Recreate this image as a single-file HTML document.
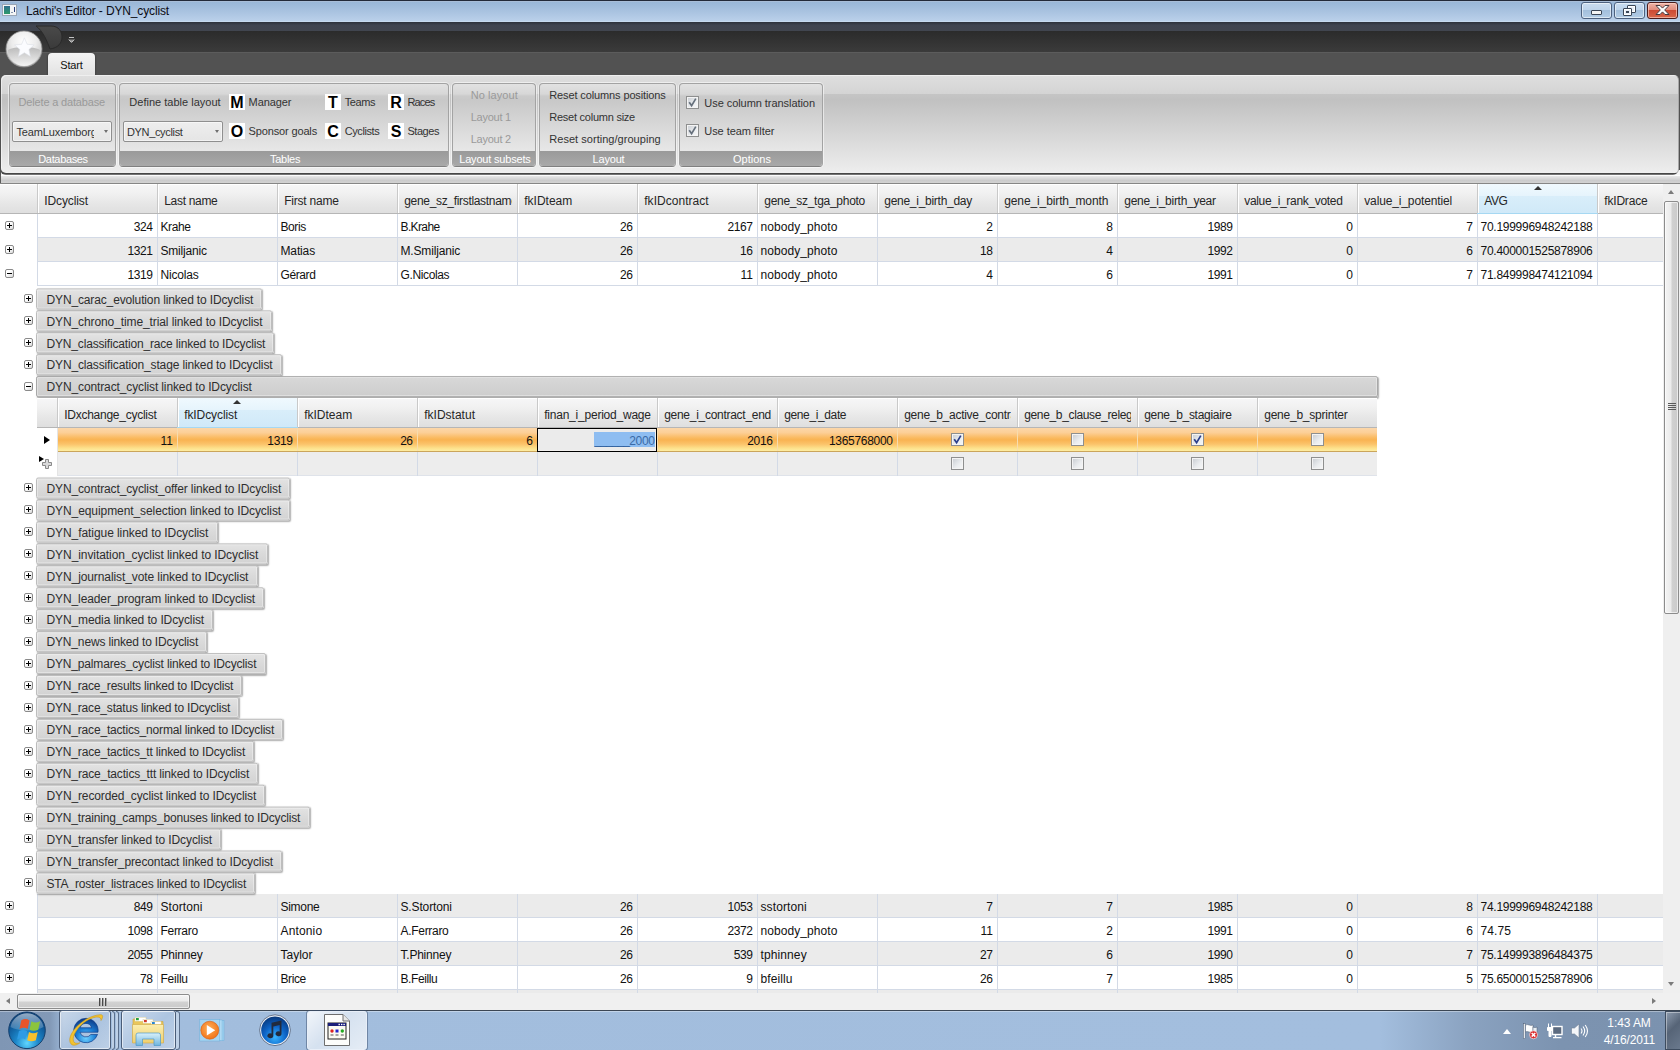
<!DOCTYPE html>
<html><head><meta charset="utf-8"><title>Lachi's Editor - DYN_cyclist</title>
<style>
html,body{margin:0;padding:0;background:#fff;}
body{width:1680px;height:1050px;overflow:hidden;font-family:"Liberation Sans",sans-serif;font-size:12px;}
#r{position:relative;width:1680px;height:1050px;overflow:hidden;background:#fff;}
#r div,#r span,#r svg{position:absolute;box-sizing:border-box;}
.t{white-space:pre;line-height:16px;height:16px;}
.grp{border:1px solid #a3a3a3;border-bottom-color:#808080;border-radius:4px;top:83px;height:84px;overflow:hidden;
 background:linear-gradient(#e2e2e2 0,#d7d7d7 10px,#cbcbcb 12px,#c8c8c8 16px,#e8e8e8 68px);box-shadow:0 0 0 1px rgba(255,255,255,.55);}
.grp i{position:absolute;left:0;right:0;bottom:0;height:15px;background:linear-gradient(#9a9a9a,#a9a9a9);}
.combo{top:121px;height:21px;width:100px;border:1px solid #8f8f8f;border-radius:2px;background:linear-gradient(#eeeeee,#e5e5e5);box-shadow:inset 0 0 0 1px rgba(255,255,255,.55);}
.combo b{position:absolute;right:3px;top:8px;width:0;height:0;border-left:2.5px solid transparent;border-right:2.5px solid transparent;border-top:3px solid #6e6e6e;}
.ico{width:16px;height:16px;background:#fff;}
.cb{width:13px;height:13px;border:1px solid #8e8f8f;background:linear-gradient(135deg,#cdd1d6 10%,#eceef0 60%,#f6f6f7 100%);box-shadow:inset 0 0 0 1px #f4f4f4;}
.cb.r{}
.xb.on{background:linear-gradient(#d8d8d8,#cdcdcd);border-color:#a8a8a8;}
.hdr{background:linear-gradient(#ffffff 0,#ffffff 1px,#f6f6f7 1px,#f0f0f0 35%,#e7e7e7 65%,#dfdfdf 100%);border-bottom:1px solid #b6b6b6;}
.hsep{width:2px;background:linear-gradient(90deg,#c9c9c9 0,#c9c9c9 50%,#fff 50%);}
.hsort{background:linear-gradient(#f0f9fe 0,#e6f4fc 40%,#d9eefa 42%,#d0e9f8 100%);border:1px solid #a6d8f2;border-top:none;}
.vl{width:1px;background:#d3dae6;}
.hl{height:1px;background:#d3dae6;}
.alt{background:#ebebeb;}
.xb{height:21px;border:1px solid #bdbdbd;border-radius:2px;background:linear-gradient(#e3e3e3 0,#dadada 50%,#d3d3d3 100%);box-shadow:1px 1px 1.5px rgba(0,0,0,.32), inset 0 0 0 1px rgba(255,255,255,.35);}
.pm{width:9px;height:9px;border:1px solid #8a8a8a;border-radius:2px;background:linear-gradient(135deg,#fff 0,#fff 40%,#d8d8d8 100%);}
.pm:before{content:"";position:absolute;left:1px;top:3px;width:5px;height:1px;background:#000;}
.pm.p:after{content:"";position:absolute;left:3px;top:1px;width:1px;height:5px;background:#000;}
.wb{top:2px;height:17px;width:31px;border:1px solid #4d617f;border-radius:3px;background:linear-gradient(#c9dcf0 0,#bdd3ea 48%,#a3bfdc 50%,#b3cde6 100%);box-shadow:inset 0 0 0 1px rgba(255,255,255,.55);}
.tbb{top:1010px;height:40px;border:1px solid #4a5d78;border-radius:3px;background:linear-gradient(135deg,rgba(255,255,255,.45),rgba(255,255,255,.12) 55%,rgba(255,255,255,.3));box-shadow:inset 0 0 0 1px rgba(255,255,255,.55);}
</style></head><body><div id="r">
<div style="left:0;top:0;width:1680px;height:22px;background:linear-gradient(#97b5d6 0,#9fbbda 25%,#acc5e2 60%,#bcd2eb 100%);"></div><div style="left:0;top:0;width:1680px;height:1px;background:#232a38;"></div><div style="left:0;top:1px;width:1680px;height:1px;background:#a9bed8;"></div><div style="left:0;top:21px;width:1680px;height:1px;background:#c6daf0;"></div><div style="left:2px;top:4px;width:15px;height:12px;background:#f4f5f6;border:1px solid #9aa6b6;"></div><div style="left:4px;top:6px;width:6px;height:8px;background:linear-gradient(#2f6f8f,#2f9a6a);"></div><div style="left:11px;top:12px;width:2px;height:1px;background:#8a98ac;"></div><div style="left:14px;top:7px;width:1px;height:5px;background:#2a3f7a;"></div><div class="wb" style="left:1581px;"></div><div style="left:1591px;top:10px;width:11px;height:5px;border:1px solid #3b4656;border-radius:1px;background:#f4f4f4;"></div><div class="wb" style="left:1614px;"></div><div style="left:1627px;top:5px;width:9px;height:8px;border:1px solid #3b4656;border-radius:1px;background:#e8eef6;box-shadow:inset 0 0 0 1px #fff;"></div><div style="left:1623px;top:8px;width:9px;height:8px;border:1px solid #3b4656;border-radius:1px;background:#e8eef6;box-shadow:inset 0 0 0 1px #fff;"></div><div style="left:1626px;top:11px;width:3px;height:2px;background:#3b4656;"></div><div class="wb" style="left:1647px;border-color:#4a1c1c;background:linear-gradient(#eeb3a6 0,#e0897a 48%,#cd4a33 50%,#d8674a 100%);box-shadow:inset 0 0 0 1px rgba(255,220,210,.6);"></div><svg style="left:1655px;top:4px" width="15" height="12" viewBox="0 0 15 12"><path d="M1 1.5h4l2.5 2.6 2.5-2.6h4l-4.3 4.5 4.3 4.5h-4l-2.5-2.6-2.5 2.6h-4l4.3-4.5z" fill="#fbfbfb" stroke="#453a40" stroke-width="1" stroke-linejoin="round"/></svg><div style="left:0;top:22px;width:1680px;height:9px;background:linear-gradient(#2c313b 0,#3f4450 35%,#41454f 100%);"></div><div style="left:0;top:31px;width:1680px;height:21px;background:linear-gradient(#2b2b2b,#3b3b3b);"></div><div style="left:0;top:52px;width:1680px;height:23px;background:#525252;border-top:1px solid #5c5c5c;"></div><svg style="left:34px;top:24px" width="32" height="28" viewBox="0 0 32 28"><defs><linearGradient id="qg" x1="0" y1="0" x2="0" y2="1"><stop offset="0" stop-color="#4a4a4a"/><stop offset="1" stop-color="#3a3a3a"/></linearGradient></defs><path d="M2 2 H17 C25 2 28 8 28 13 C28 19 24 24 16 25 C13 17 9 7 2 2 Z" fill="url(#qg)" stroke="#2a2a2a" stroke-width="1"/></svg><div style="left:69px;top:37px;width:5px;height:1px;background:#c4c4c4;"></div><svg style="left:68px;top:39px" width="7" height="5" viewBox="0 0 7 5"><path d="M.8 .6 L3.5 3.4 L6.2 .6" fill="#8a8a8a" stroke="#cfcfcf" stroke-width="1"/></svg><div style="left:48px;top:53px;width:47px;height:23px;border-radius:4px 4px 0 0;background:linear-gradient(#f4f4f4,#e2e2e2);box-shadow:0 0 2px rgba(0,0,0,.5);"></div><svg style="left:4px;top:29px" width="40" height="40" viewBox="0 0 40 40"><defs><radialGradient id="ab" cx="0.5" cy="0.3" r="0.75"><stop offset="0" stop-color="#ffffff"/><stop offset="0.45" stop-color="#ececec"/><stop offset="0.8" stop-color="#c9c9c9"/><stop offset="1" stop-color="#a8a8a8"/></radialGradient><linearGradient id="ab2" x1="0" y1="0" x2="0" y2="1"><stop offset="0" stop-color="#b2b2b2"/><stop offset="1" stop-color="#fbfbfb"/></linearGradient></defs><circle cx="20" cy="20" r="18" fill="url(#ab)" stroke="#8e8e8e" stroke-width="0.8"/><path d="M4 21 A16 16 0 0 0 36 21 C30 17 10 17 4 21Z" fill="url(#ab2)" opacity="0.88"/><path d="M20.4 8.8 l2.8 6.5 7 .6 -5.3 4.7 1.6 6.9 -6.1 -3.7 -6.1 3.7 1.6 -6.9 -5.3 -4.7 7 -.6z" fill="#fbfcff" stroke="#dcdfe6" stroke-width="0.6"/></svg><div style="left:0;top:75px;width:1680px;height:101px;background:#525252;"></div><div style="left:1px;top:170px;width:1679px;height:14px;background:#f4f4f4;"></div><div style="left:0;top:79px;width:1678px;height:96px;border-radius:0 0 5px 6px;background:linear-gradient(#505050 0,#505050 93px,#474747 94px,#474747 95px,#747474 95px,#747474 96px);"></div><div style="left:1px;top:75px;width:1678px;height:98px;border-radius:5px 5px 4px 5px;border-right:1px solid #a8a8a8;background:linear-gradient(#dfdfdf 0,#d4d4d4 19px,#c5c5c5 19px,#c1c1c1 25px,#ececec 95px,#f0f0f0 98px);box-shadow:inset 1px 1px 0 rgba(255,255,255,.5);"></div><div class="grp" style="left:9px;width:107px;"><i></i></div><div class="grp" style="left:119px;width:330px;"><i></i></div><div class="grp" style="left:452px;width:84px;"><i></i></div><div class="grp" style="left:539px;width:137px;"><i></i></div><div class="grp" style="left:679px;width:144px;"><i></i></div><div class="combo" style="left:12px;"><b></b></div><div class="combo" style="left:123px;"><b></b></div><div class="ico" style="left:229px;top:94px;"></div><div class="ico" style="left:325px;top:94px;"></div><div class="ico" style="left:388px;top:94px;"></div><div class="ico" style="left:229px;top:123px;"></div><div class="ico" style="left:325px;top:123px;"></div><div class="ico" style="left:388px;top:123px;"></div><div class="cb" style="left:686px;top:96px;"></div><svg style="left:686px;top:96px" width="13" height="13" viewBox="0 0 13 13"><path d="M3.2 6.2 L5.6 9.6 L9.8 2.6" fill="none" stroke="#66707c" stroke-width="1.7"/></svg><div class="cb" style="left:686px;top:124px;"></div><svg style="left:686px;top:124px" width="13" height="13" viewBox="0 0 13 13"><path d="M3.2 6.2 L5.6 9.6 L9.8 2.6" fill="none" stroke="#66707c" stroke-width="1.7"/></svg><div style="left:0;top:175px;width:1680px;height:1px;background:#fcfcfc;border-left:1px solid #5a5a5a;"></div><div style="left:0;top:176px;width:1680px;height:7px;background:linear-gradient(#e8e8e8 0,#cbcbcc 65%,#d3d3d3 100%);border-left:1px solid #5a5a5a;"></div><div style="left:0;top:183px;width:1680px;height:1px;background:#868686;"></div><div class="hdr" style="left:0;top:184px;width:1663px;height:30px;"></div><div class="hsort" style="left:1477px;top:184px;width:121px;height:30px;"></div><div class="hsep" style="left:37px;top:184px;height:29px;"></div><div class="hsep" style="left:157px;top:184px;height:29px;"></div><div class="hsep" style="left:277px;top:184px;height:29px;"></div><div class="hsep" style="left:397px;top:184px;height:29px;"></div><div class="hsep" style="left:517px;top:184px;height:29px;"></div><div class="hsep" style="left:637px;top:184px;height:29px;"></div><div class="hsep" style="left:757px;top:184px;height:29px;"></div><div class="hsep" style="left:877px;top:184px;height:29px;"></div><div class="hsep" style="left:997px;top:184px;height:29px;"></div><div class="hsep" style="left:1117px;top:184px;height:29px;"></div><div class="hsep" style="left:1237px;top:184px;height:29px;"></div><div class="hsep" style="left:1357px;top:184px;height:29px;"></div><div class="hsep" style="left:1477px;top:184px;height:29px;"></div><div class="hsep" style="left:1597px;top:184px;height:29px;"></div><div style="left:1534px;top:186px;width:0;height:0;border-left:4px solid transparent;border-right:4px solid transparent;border-bottom:4px solid #333;"></div><div class="hl" style="left:37px;top:237px;width:1626px;"></div><div class="vl" style="left:37px;top:214px;height:24px;"></div><div class="vl" style="left:157px;top:214px;height:24px;"></div><div class="vl" style="left:277px;top:214px;height:24px;"></div><div class="vl" style="left:397px;top:214px;height:24px;"></div><div class="vl" style="left:517px;top:214px;height:24px;"></div><div class="vl" style="left:637px;top:214px;height:24px;"></div><div class="vl" style="left:757px;top:214px;height:24px;"></div><div class="vl" style="left:877px;top:214px;height:24px;"></div><div class="vl" style="left:997px;top:214px;height:24px;"></div><div class="vl" style="left:1117px;top:214px;height:24px;"></div><div class="vl" style="left:1237px;top:214px;height:24px;"></div><div class="vl" style="left:1357px;top:214px;height:24px;"></div><div class="vl" style="left:1477px;top:214px;height:24px;"></div><div class="vl" style="left:1597px;top:214px;height:24px;"></div><div class="pm p" style="left:5px;top:221px;"></div><div class="alt" style="left:37px;top:238px;width:1626px;height:24px;"></div><div class="hl" style="left:37px;top:261px;width:1626px;"></div><div class="vl" style="left:37px;top:238px;height:24px;"></div><div class="vl" style="left:157px;top:238px;height:24px;"></div><div class="vl" style="left:277px;top:238px;height:24px;"></div><div class="vl" style="left:397px;top:238px;height:24px;"></div><div class="vl" style="left:517px;top:238px;height:24px;"></div><div class="vl" style="left:637px;top:238px;height:24px;"></div><div class="vl" style="left:757px;top:238px;height:24px;"></div><div class="vl" style="left:877px;top:238px;height:24px;"></div><div class="vl" style="left:997px;top:238px;height:24px;"></div><div class="vl" style="left:1117px;top:238px;height:24px;"></div><div class="vl" style="left:1237px;top:238px;height:24px;"></div><div class="vl" style="left:1357px;top:238px;height:24px;"></div><div class="vl" style="left:1477px;top:238px;height:24px;"></div><div class="vl" style="left:1597px;top:238px;height:24px;"></div><div class="pm p" style="left:5px;top:245px;"></div><div class="hl" style="left:37px;top:285px;width:1626px;"></div><div class="vl" style="left:37px;top:262px;height:24px;"></div><div class="vl" style="left:157px;top:262px;height:24px;"></div><div class="vl" style="left:277px;top:262px;height:24px;"></div><div class="vl" style="left:397px;top:262px;height:24px;"></div><div class="vl" style="left:517px;top:262px;height:24px;"></div><div class="vl" style="left:637px;top:262px;height:24px;"></div><div class="vl" style="left:757px;top:262px;height:24px;"></div><div class="vl" style="left:877px;top:262px;height:24px;"></div><div class="vl" style="left:997px;top:262px;height:24px;"></div><div class="vl" style="left:1117px;top:262px;height:24px;"></div><div class="vl" style="left:1237px;top:262px;height:24px;"></div><div class="vl" style="left:1357px;top:262px;height:24px;"></div><div class="vl" style="left:1477px;top:262px;height:24px;"></div><div class="vl" style="left:1597px;top:262px;height:24px;"></div><div class="pm " style="left:5px;top:269px;"></div><div class="alt" style="left:37px;top:894px;width:1626px;height:24px;"></div><div class="hl" style="left:37px;top:917px;width:1626px;"></div><div class="vl" style="left:37px;top:894px;height:24px;"></div><div class="vl" style="left:157px;top:894px;height:24px;"></div><div class="vl" style="left:277px;top:894px;height:24px;"></div><div class="vl" style="left:397px;top:894px;height:24px;"></div><div class="vl" style="left:517px;top:894px;height:24px;"></div><div class="vl" style="left:637px;top:894px;height:24px;"></div><div class="vl" style="left:757px;top:894px;height:24px;"></div><div class="vl" style="left:877px;top:894px;height:24px;"></div><div class="vl" style="left:997px;top:894px;height:24px;"></div><div class="vl" style="left:1117px;top:894px;height:24px;"></div><div class="vl" style="left:1237px;top:894px;height:24px;"></div><div class="vl" style="left:1357px;top:894px;height:24px;"></div><div class="vl" style="left:1477px;top:894px;height:24px;"></div><div class="vl" style="left:1597px;top:894px;height:24px;"></div><div class="pm p" style="left:5px;top:901px;"></div><div class="hl" style="left:37px;top:941px;width:1626px;"></div><div class="vl" style="left:37px;top:918px;height:24px;"></div><div class="vl" style="left:157px;top:918px;height:24px;"></div><div class="vl" style="left:277px;top:918px;height:24px;"></div><div class="vl" style="left:397px;top:918px;height:24px;"></div><div class="vl" style="left:517px;top:918px;height:24px;"></div><div class="vl" style="left:637px;top:918px;height:24px;"></div><div class="vl" style="left:757px;top:918px;height:24px;"></div><div class="vl" style="left:877px;top:918px;height:24px;"></div><div class="vl" style="left:997px;top:918px;height:24px;"></div><div class="vl" style="left:1117px;top:918px;height:24px;"></div><div class="vl" style="left:1237px;top:918px;height:24px;"></div><div class="vl" style="left:1357px;top:918px;height:24px;"></div><div class="vl" style="left:1477px;top:918px;height:24px;"></div><div class="vl" style="left:1597px;top:918px;height:24px;"></div><div class="pm p" style="left:5px;top:925px;"></div><div class="alt" style="left:37px;top:942px;width:1626px;height:24px;"></div><div class="hl" style="left:37px;top:965px;width:1626px;"></div><div class="vl" style="left:37px;top:942px;height:24px;"></div><div class="vl" style="left:157px;top:942px;height:24px;"></div><div class="vl" style="left:277px;top:942px;height:24px;"></div><div class="vl" style="left:397px;top:942px;height:24px;"></div><div class="vl" style="left:517px;top:942px;height:24px;"></div><div class="vl" style="left:637px;top:942px;height:24px;"></div><div class="vl" style="left:757px;top:942px;height:24px;"></div><div class="vl" style="left:877px;top:942px;height:24px;"></div><div class="vl" style="left:997px;top:942px;height:24px;"></div><div class="vl" style="left:1117px;top:942px;height:24px;"></div><div class="vl" style="left:1237px;top:942px;height:24px;"></div><div class="vl" style="left:1357px;top:942px;height:24px;"></div><div class="vl" style="left:1477px;top:942px;height:24px;"></div><div class="vl" style="left:1597px;top:942px;height:24px;"></div><div class="pm p" style="left:5px;top:949px;"></div><div class="hl" style="left:37px;top:989px;width:1626px;"></div><div class="vl" style="left:37px;top:966px;height:24px;"></div><div class="vl" style="left:157px;top:966px;height:24px;"></div><div class="vl" style="left:277px;top:966px;height:24px;"></div><div class="vl" style="left:397px;top:966px;height:24px;"></div><div class="vl" style="left:517px;top:966px;height:24px;"></div><div class="vl" style="left:637px;top:966px;height:24px;"></div><div class="vl" style="left:757px;top:966px;height:24px;"></div><div class="vl" style="left:877px;top:966px;height:24px;"></div><div class="vl" style="left:997px;top:966px;height:24px;"></div><div class="vl" style="left:1117px;top:966px;height:24px;"></div><div class="vl" style="left:1237px;top:966px;height:24px;"></div><div class="vl" style="left:1357px;top:966px;height:24px;"></div><div class="vl" style="left:1477px;top:966px;height:24px;"></div><div class="vl" style="left:1597px;top:966px;height:24px;"></div><div class="pm p" style="left:5px;top:973px;"></div><div class="alt" style="left:37px;top:990px;width:1626px;height:3px;"></div><div class="vl" style="left:37px;top:990px;height:3px;"></div><div class="vl" style="left:157px;top:990px;height:3px;"></div><div class="vl" style="left:277px;top:990px;height:3px;"></div><div class="vl" style="left:397px;top:990px;height:3px;"></div><div class="vl" style="left:517px;top:990px;height:3px;"></div><div class="vl" style="left:637px;top:990px;height:3px;"></div><div class="vl" style="left:757px;top:990px;height:3px;"></div><div class="vl" style="left:877px;top:990px;height:3px;"></div><div class="vl" style="left:997px;top:990px;height:3px;"></div><div class="vl" style="left:1117px;top:990px;height:3px;"></div><div class="vl" style="left:1237px;top:990px;height:3px;"></div><div class="vl" style="left:1357px;top:990px;height:3px;"></div><div class="vl" style="left:1477px;top:990px;height:3px;"></div><div class="vl" style="left:1597px;top:990px;height:3px;"></div><div class="xb" style="left:36px;top:288px;width:226px;transform:translateY(0.40px);"></div><div class="pm p" style="left:24px;top:294px;"></div><div class="xb" style="left:36px;top:310px;width:236px;transform:translateY(0.33px);"></div><div class="pm p" style="left:24px;top:316px;"></div><div class="xb" style="left:36px;top:332px;width:238px;transform:translateY(0.26px);"></div><div class="pm p" style="left:24px;top:338px;"></div><div class="xb" style="left:36px;top:354px;width:246px;transform:translateY(0.19px);"></div><div class="pm p" style="left:24px;top:360px;"></div><div class="xb on" style="left:36px;top:376px;width:1342px;transform:translateY(0.12px);"></div><div class="pm " style="left:24px;top:382px;"></div><div class="xb" style="left:36px;top:477px;width:254px;transform:translateY(0.55px);"></div><div class="pm p" style="left:24px;top:483px;"></div><div class="xb" style="left:36px;top:499px;width:254px;transform:translateY(0.49px);"></div><div class="pm p" style="left:24px;top:505px;"></div><div class="xb" style="left:36px;top:521px;width:182px;transform:translateY(0.43px);"></div><div class="pm p" style="left:24px;top:527px;"></div><div class="xb" style="left:36px;top:543px;width:232px;transform:translateY(0.37px);"></div><div class="pm p" style="left:24px;top:549px;"></div><div class="xb" style="left:36px;top:565px;width:222px;transform:translateY(0.31px);"></div><div class="pm p" style="left:24px;top:571px;"></div><div class="xb" style="left:36px;top:587px;width:228px;transform:translateY(0.25px);"></div><div class="pm p" style="left:24px;top:593px;"></div><div class="xb" style="left:36px;top:609px;width:177px;transform:translateY(0.19px);"></div><div class="pm p" style="left:24px;top:615px;"></div><div class="xb" style="left:36px;top:631px;width:171px;transform:translateY(0.13px);"></div><div class="pm p" style="left:24px;top:637px;"></div><div class="xb" style="left:36px;top:653px;width:230px;transform:translateY(0.07px);"></div><div class="pm p" style="left:24px;top:659px;"></div><div class="xb" style="left:36px;top:675px;width:206px;"></div><div class="pm p" style="left:24px;top:681px;"></div><div class="xb" style="left:36px;top:696px;width:203px;transform:translateY(0.95px);"></div><div class="pm p" style="left:24px;top:703px;"></div><div class="xb" style="left:36px;top:718px;width:247px;transform:translateY(0.89px);"></div><div class="pm p" style="left:24px;top:725px;"></div><div class="xb" style="left:36px;top:740px;width:218px;transform:translateY(0.83px);"></div><div class="pm p" style="left:24px;top:747px;"></div><div class="xb" style="left:36px;top:762px;width:222px;transform:translateY(0.77px);"></div><div class="pm p" style="left:24px;top:769px;"></div><div class="xb" style="left:36px;top:784px;width:229px;transform:translateY(0.71px);"></div><div class="pm p" style="left:24px;top:791px;"></div><div class="xb" style="left:36px;top:806px;width:274px;transform:translateY(0.65px);"></div><div class="pm p" style="left:24px;top:813px;"></div><div class="xb" style="left:36px;top:828px;width:185px;transform:translateY(0.59px);"></div><div class="pm p" style="left:24px;top:834px;"></div><div class="xb" style="left:36px;top:850px;width:246px;transform:translateY(0.53px);"></div><div class="pm p" style="left:24px;top:856px;"></div><div class="xb" style="left:36px;top:872px;width:219px;transform:translateY(0.47px);"></div><div class="pm p" style="left:24px;top:878px;"></div><div class="hdr" style="left:37px;top:398px;width:1340px;height:30px;"></div><div class="hsort" style="left:177px;top:398px;width:121px;height:30px;"></div><div class="hsep" style="left:57px;top:398px;height:29px;"></div><div class="hsep" style="left:177px;top:398px;height:29px;"></div><div class="hsep" style="left:297px;top:398px;height:29px;"></div><div class="hsep" style="left:417px;top:398px;height:29px;"></div><div class="hsep" style="left:537px;top:398px;height:29px;"></div><div class="hsep" style="left:657px;top:398px;height:29px;"></div><div class="hsep" style="left:777px;top:398px;height:29px;"></div><div class="hsep" style="left:897px;top:398px;height:29px;"></div><div class="hsep" style="left:1017px;top:398px;height:29px;"></div><div class="hsep" style="left:1137px;top:398px;height:29px;"></div><div class="hsep" style="left:1257px;top:398px;height:29px;"></div><div style="left:233px;top:400px;width:0;height:0;border-left:4px solid transparent;border-right:4px solid transparent;border-bottom:4px solid #333;"></div><div style="left:57px;top:428px;width:1320px;height:24px;background:linear-gradient(#fcd7aa 0,#fccf97 20%,#fab95e 44%,#f9b352 52%,#fbc36a 70%,#fde18c 88%,#feeda2 100%);border-bottom:1px solid #caa55c;"></div><div style="left:57px;top:452px;width:1320px;height:24px;background:#ededed;"></div><div class="hl" style="left:57px;top:475px;width:1320px;background:#dfe3ea;"></div><div class="vl" style="left:177px;top:428px;height:23px;background:#f7dcae;"></div><div class="vl" style="left:177px;top:452px;height:24px;"></div><div class="vl" style="left:297px;top:428px;height:23px;background:#f7dcae;"></div><div class="vl" style="left:297px;top:452px;height:24px;"></div><div class="vl" style="left:417px;top:428px;height:23px;background:#f7dcae;"></div><div class="vl" style="left:417px;top:452px;height:24px;"></div><div class="vl" style="left:537px;top:428px;height:23px;background:#f7dcae;"></div><div class="vl" style="left:537px;top:452px;height:24px;"></div><div class="vl" style="left:657px;top:428px;height:23px;background:#f7dcae;"></div><div class="vl" style="left:657px;top:452px;height:24px;"></div><div class="vl" style="left:777px;top:428px;height:23px;background:#f7dcae;"></div><div class="vl" style="left:777px;top:452px;height:24px;"></div><div class="vl" style="left:897px;top:428px;height:23px;background:#f7dcae;"></div><div class="vl" style="left:897px;top:452px;height:24px;"></div><div class="vl" style="left:1017px;top:428px;height:23px;background:#f7dcae;"></div><div class="vl" style="left:1017px;top:452px;height:24px;"></div><div class="vl" style="left:1137px;top:428px;height:23px;background:#f7dcae;"></div><div class="vl" style="left:1137px;top:452px;height:24px;"></div><div class="vl" style="left:1257px;top:428px;height:23px;background:#f7dcae;"></div><div class="vl" style="left:1257px;top:452px;height:24px;"></div><div class="vl" style="left:57px;top:428px;height:48px;background:#e4e4e4;"></div><div style="left:44px;top:436px;width:0;height:0;border-top:4px solid transparent;border-bottom:4px solid transparent;border-left:6px solid #000;"></div><div style="left:39px;top:456px;width:0;height:0;border-top:3.5px solid transparent;border-bottom:3.5px solid transparent;border-left:5px solid #000;"></div><svg style="left:42px;top:459px" width="10" height="10" viewBox="0 0 10 10"><path d="M3.5 .5h3v3h3v3h-3v3h-3v-3h-3v-3h3z" fill="#d9d9da" stroke="#8a8a8a" stroke-width="1"/></svg><div style="left:537px;top:428px;width:120px;height:24px;background:#ebebeb;border:1px solid #000;box-shadow:inset 0 0 0 1px #f2f0ee;"></div><div style="left:594px;top:432px;width:61px;height:15px;background:#8ebdf1;"></div><div class="cb" style="left:951px;top:433px;"></div><div class="cb r" style="left:951px;top:457px;"></div><svg style="left:951px;top:433px" width="13" height="13" viewBox="0 0 13 13"><path d="M3.2 6.2 L5.6 9.6 L9.8 2.6" fill="none" stroke="#2b3f8c" stroke-width="1.7"/></svg><div class="cb" style="left:1071px;top:433px;"></div><div class="cb r" style="left:1071px;top:457px;"></div><div class="cb" style="left:1191px;top:433px;"></div><div class="cb r" style="left:1191px;top:457px;"></div><svg style="left:1191px;top:433px" width="13" height="13" viewBox="0 0 13 13"><path d="M3.2 6.2 L5.6 9.6 L9.8 2.6" fill="none" stroke="#2b3f8c" stroke-width="1.7"/></svg><div class="cb" style="left:1311px;top:433px;"></div><div class="cb r" style="left:1311px;top:457px;"></div><div style="left:1663px;top:184px;width:17px;height:809px;background:#efefef;"></div><div style="left:1664px;top:201px;width:15px;height:413px;border:1px solid #8c8c8c;border-radius:2px;background:linear-gradient(90deg,#f4f4f4 0,#ebebeb 45%,#d0d0d0 55%,#cacaca 100%);box-shadow:inset 0 0 0 1px rgba(255,255,255,.6);"></div><div style="left:1668px;top:403px;width:8px;height:1px;background:#5a5a5a;"></div><div style="left:1668px;top:405px;width:8px;height:1px;background:#5a5a5a;"></div><div style="left:1668px;top:407px;width:8px;height:1px;background:#5a5a5a;"></div><div style="left:1668px;top:409px;width:8px;height:1px;background:#5a5a5a;"></div><div style="left:1668px;top:190px;width:0;height:0;border-left:3.5px solid transparent;border-right:3.5px solid transparent;border-bottom:4px solid #7b7b7b;"></div><div style="left:1668px;top:982px;width:0;height:0;border-left:3.5px solid transparent;border-right:3.5px solid transparent;border-top:4px solid #7b7b7b;"></div><div style="left:0;top:993px;width:1680px;height:17px;background:#f0f0f0;"></div><div style="left:17px;top:994px;width:173px;height:15px;border:1px solid #8c8c8c;border-radius:2px;background:linear-gradient(#f4f4f4 0,#ebebeb 45%,#d2d2d2 55%,#cacaca 100%);box-shadow:inset 0 0 0 1px rgba(255,255,255,.6);"></div><div style="left:99px;top:998px;width:2px;height:8px;background:linear-gradient(90deg,#4a4a4a 50%,#a6a6a6 50%);"></div><div style="left:102px;top:998px;width:2px;height:8px;background:linear-gradient(90deg,#4a4a4a 50%,#a6a6a6 50%);"></div><div style="left:105px;top:998px;width:2px;height:8px;background:linear-gradient(90deg,#4a4a4a 50%,#a6a6a6 50%);"></div><div style="left:6px;top:998px;width:0;height:0;border-top:3.5px solid transparent;border-bottom:3.5px solid transparent;border-right:4px solid #7b7b7b;"></div><div style="left:1652px;top:998px;width:0;height:0;border-top:3.5px solid transparent;border-bottom:3.5px solid transparent;border-left:4px solid #7b7b7b;"></div><div style="left:0;top:1010px;width:1680px;height:40px;background:linear-gradient(90deg,#7f96b4 0,#8299b7 50px,#9db8d8 64px,#a2bddd 120px,#a3bede 1380px,#8aa2c0 1470px,#7c93b0 1560px,#7b92af 1680px);"></div><div style="left:0;top:1010px;width:1680px;height:1px;background:#3b4654;"></div><div style="left:0;top:1011px;width:1680px;height:1px;background:rgba(255,255,255,.35);"></div><svg style="left:6px;top:1010px" width="42" height="40" viewBox="0 0 42 40"><defs>
<radialGradient id="so" cx="0.5" cy="0.85" r="0.9"><stop offset="0" stop-color="#5fd6ff"/><stop offset="0.35" stop-color="#1c86c9"/><stop offset="0.75" stop-color="#0d4f8d"/><stop offset="1" stop-color="#0a3668"/></radialGradient>
<linearGradient id="sh" x1="0" y1="0" x2="0" y2="1"><stop offset="0" stop-color="#fff" stop-opacity=".7"/><stop offset="1" stop-color="#fff" stop-opacity=".18"/></linearGradient></defs>
<circle cx="21" cy="20.3" r="18.3" fill="url(#so)" stroke="#16406d" stroke-width="1"/>
<path d="M4.5 17 A16.8 16.8 0 0 1 37.5 17 C30 21.5 12 21.5 4.5 17Z" fill="url(#sh)" opacity=".8"/>
<g transform="translate(22.6 20.2) scale(1.32) translate(-19.7 -20.2)"><path d="M14.2 12.6 C16.6 11.4 18.6 11.6 20.4 12.8 L19 19.2 C17.2 18 15.2 18 12.8 19.2Z" fill="#e8542a"/>
<path d="M21.8 13.4 C23.8 14.6 26 14.6 28.4 13.4 L27 19.8 C24.6 21 22.4 20.8 20.4 19.8Z" fill="#8cc43c"/>
<path d="M12.4 20.8 C14.8 19.6 16.8 19.8 18.6 21 L17.2 27.2 C15.4 26 13.4 26 11 27.2Z" fill="#2f9be4"/>
<path d="M20 21.6 C22 22.8 24.2 22.8 26.6 21.6 L25.2 27.8 C22.8 29 20.6 28.8 18.6 27.8Z" fill="#f7c02c"/></g>
</svg><div class="tbb" style="left:59px;width:52px;"></div><div style="left:112px;top:1011px;width:3px;height:39px;border:1px solid #5a6f8c;border-left:none;border-radius:0 3px 3px 0;background:rgba(255,255,255,.3);"></div><div style="left:116px;top:1011px;width:3px;height:39px;border:1px solid #5a6f8c;border-left:none;border-radius:0 3px 3px 0;background:rgba(255,255,255,.3);"></div><svg style="left:66px;top:1010px" width="40" height="40" viewBox="0 0 36 36"><defs>
<radialGradient id="ie" cx="0.5" cy="0.8" r="0.85"><stop offset="0" stop-color="#6fd2ff"/><stop offset="0.45" stop-color="#1c7fd6"/><stop offset="1" stop-color="#0a2f7a"/></radialGradient></defs>
<path d="M18 7.5 a11 11 0 1 0 10.4 14.5 h-6 a5.5 5.5 0 0 1-9.8-2 h16.2 a11 11 0 0 0-10.8-12.5z M12.7 16 a5.4 5.4 0 0 1 10.4 0z" fill="url(#ie)" stroke="#0a3a86" stroke-width=".6"/>
<path d="M4.5 30.5 C-1 24 14 5.5 31 4.2 C34 4 33 7.5 31.5 9.5 C31.8 6 28 5.4 22.2 7.8 C11.5 12.3 4 24.4 7.3 29 C8.3 30.2 10.5 30.2 12.5 29.5 C9.5 32 6 32.3 4.5 30.5Z" fill="#f2c230" stroke="#c89716" stroke-width=".5"/>
</svg><div class="tbb" style="left:121px;width:55px;"></div><div style="left:176px;top:1011px;width:4px;height:39px;border:1px solid #5a6f8c;border-left:none;border-radius:0 3px 3px 0;background:rgba(255,255,255,.3);"></div><svg style="left:130px;top:1015px" width="36" height="33" viewBox="0 0 36 33"><defs>
<linearGradient id="fo" x1="0" y1="0" x2="0" y2="1"><stop offset="0" stop-color="#fbeeb0"/><stop offset="1" stop-color="#efcf6e"/></linearGradient>
<linearGradient id="fb" x1="0" y1="0" x2="0" y2="1"><stop offset="0" stop-color="#d9f1fb"/><stop offset="1" stop-color="#6fb5de"/></linearGradient></defs>
<path d="M3 4 h13 l1.5 2.5 H33 V27 H3Z" fill="#e9c65c" stroke="#c9a53e" stroke-width=".6"/>
<rect x="5" y="2.2" width="11" height="4" fill="#fff" stroke="#d7c88e" stroke-width=".4"/><rect x="6" y="3" width="2.8" height="2.2" fill="#26a03a"/>
<rect x="13" y="4.3" width="10" height="4" fill="#fff" stroke="#d7c88e" stroke-width=".4"/><rect x="14" y="5" width="2.8" height="2.2" fill="#d23a2a"/>
<rect x="21" y="6.4" width="10" height="4" fill="#fff" stroke="#d7c88e" stroke-width=".4"/><rect x="22" y="7" width="2.8" height="2.2" fill="#2a86d2"/>
<path d="M2.5 9.5 H33.5 V28 H2.5Z" fill="url(#fo)" stroke="#d0aa45" stroke-width=".6"/>
<path d="M6 30.5 V20 q0-2 2-2 h20.5 q2 0 2 2 V30.5 h-6.5 V24 h-11.5 v6.5Z" fill="url(#fb)" stroke="#4f9ac8" stroke-width=".7"/>
</svg><svg style="left:197px;top:1017px" width="30" height="28" viewBox="0 0 30 28"><defs>
<radialGradient id="wm" cx="0.45" cy="0.4" r="0.7"><stop offset="0" stop-color="#ffb057"/><stop offset="1" stop-color="#ee6a10"/></radialGradient></defs>
<rect x="7" y="3.5" width="20" height="20" fill="#9fd0ef" stroke="#6fb0da" stroke-width=".5"/>
<rect x="5" y="3" width="20" height="20.5" fill="#b4dcf4" stroke="#79b7de" stroke-width=".5"/>
<rect x="2.8" y="2.5" width="20" height="21.5" fill="#a6d4f1" stroke="#6db0dc" stroke-width=".5"/>
<circle cx="12.8" cy="13.2" r="9" fill="url(#wm)" stroke="#d95c0c" stroke-width=".6"/>
<path d="M9.8 8 L18.2 13.2 L9.8 18.4Z" fill="#fff"/></svg><svg style="left:258px;top:1013px" width="34" height="34" viewBox="0 0 34 34"><defs>
<radialGradient id="it" cx="0.5" cy="0.75" r="0.8"><stop offset="0" stop-color="#38b4ff"/><stop offset="0.5" stop-color="#0d63c6"/><stop offset="1" stop-color="#07306e"/></radialGradient></defs>
<circle cx="17" cy="17.2" r="15.4" fill="#e9eef5" stroke="#3b4a66" stroke-width=".7"/>
<circle cx="17" cy="17.2" r="13.8" fill="url(#it)"/>
<path d="M13.5 9.8 L23.5 7.6 V20.8 a3 2.4 0 1 1-1.8-2.2 V12 L15.3 13.4 V22.8 a3 2.4 0 1 1-1.8-2.2Z" fill="#222b3d"/>
</svg><div style="left:307px;top:1011px;width:60px;height:39px;border:1px solid #e8eff8;border-radius:3px;background:linear-gradient(135deg,rgba(255,255,255,.85) 0,rgba(255,255,255,.55) 45%,rgba(255,255,255,.72) 100%);box-shadow:0 0 0 1px rgba(60,80,110,.5);"></div><svg style="left:323px;top:1013px" width="28" height="34" viewBox="0 0 28 34">
<path d="M1.5 1.5 H20 L26.5 8 V32.5 H1.5Z" fill="#fdfdfb" stroke="#6e6e6e" stroke-width="1"/>
<path d="M20 1.5 V8 H26.5" fill="#e8e8e8" stroke="#6e6e6e" stroke-width="1"/>
<rect x="5" y="10" width="18" height="16" fill="#fbfaf2" stroke="#222" stroke-width="1"/>
<rect x="5" y="10" width="18" height="3" fill="#1b1f7a"/>
<rect x="15.5" y="10.8" width="1.4" height="1.4" fill="#fff"/><rect x="18" y="10.8" width="1.4" height="1.4" fill="#fff"/><rect x="20.4" y="10.8" width="1.4" height="1.4" fill="#fff"/>
<circle cx="9" cy="18" r="1.7" fill="#d22"/><rect x="12.5" y="16.5" width="3" height="3" fill="#22c"/><circle cx="19.3" cy="18" r="1.7" fill="#2a2"/>
<rect x="7.5" y="21.5" width="3" height="1" fill="#555"/><rect x="12.5" y="21.5" width="3" height="1" fill="#555"/><rect x="17.8" y="21.5" width="3" height="1" fill="#555"/>
</svg><div style="left:1503px;top:1029px;width:0;height:0;border-left:4px solid transparent;border-right:4px solid transparent;border-bottom:5px solid #fff;"></div><svg style="left:1522px;top:1022px" width="18" height="18" viewBox="0 0 18 18">
<rect x="1.5" y="1.5" width="1.6" height="15" fill="#fff" stroke="#4a5a70" stroke-width=".5"/>
<path d="M3.5 3 C6 1.5 8 4.5 11 3 V10 C8 11.5 6 8.5 3.5 10Z" fill="#fff" stroke="#4a5a70" stroke-width=".5"/>
<path d="M11 5 C12.5 6 14 5.5 15 5 V10.5 C13.5 11.2 12.5 11 11 10.2Z" fill="#e8eef5" stroke="#4a5a70" stroke-width=".5"/>
<circle cx="11.5" cy="12.8" r="4" fill="#d8282a" stroke="#fff" stroke-width=".6"/>
<path d="M9.7 11 L13.3 14.6 M13.3 11 L9.7 14.6" stroke="#fff" stroke-width="1.5"/></svg><svg style="left:1546px;top:1022px" width="18" height="18" viewBox="0 0 18 18">
<path d="M2.5 1.5 v4 M5.5 1.5 v4 M1.5 5.5 h5 v3 h-1.5 v6 h-2 v-6 h-1.5z" fill="#fff" stroke="#fff" stroke-width="1"/>
<rect x="6.5" y="4.5" width="9.5" height="8" fill="#5c6b80" stroke="#fff" stroke-width="1.4"/>
<path d="M9.5 12.5 v2.5 M7 15.6 h8.5" stroke="#fff" stroke-width="1.4"/></svg><svg style="left:1570px;top:1022px" width="19" height="18" viewBox="0 0 19 18">
<path d="M1.5 6 h3 L9 2 V16 L4.5 12 h-3Z" fill="#f4f6f9" stroke="#6f7f95" stroke-width=".6"/>
<path d="M11 6.5 q2 2.5 0 5 M13 4.5 q3.4 4.5 0 9 M15.2 3 q4.6 6 0 12" fill="none" stroke="#fff" stroke-width="1.1"/></svg><div style="left:1665px;top:1011px;width:15px;height:39px;border:1px solid #3e4c5f;border-right:none;background:linear-gradient(135deg,#8f9db0 0,#566477 45%,#6a798d 100%);box-shadow:inset 1px 1px 0 rgba(255,255,255,.4);"></div>
<span class="t" style="top:3.00px;font-size:12px;color:#0b0b12;letter-spacing:-0.143px;left:26.00px;">Lachi&#x27;s Editor - DYN_cyclist</span>
<span class="t" style="top:57.30px;font-size:11px;color:#111;letter-spacing:-0.187px;left:60.30px;">Start</span>
<span class="t" style="top:151.30px;font-size:11px;color:#fff;letter-spacing:-0.344px;left:38.28px;">Databases</span>
<span class="t" style="top:151.30px;font-size:11px;color:#fff;letter-spacing:-0.249px;left:269.93px;">Tables</span>
<span class="t" style="top:151.30px;font-size:11px;color:#fff;letter-spacing:-0.186px;left:459.21px;">Layout subsets</span>
<span class="t" style="top:151.30px;font-size:11px;color:#fff;letter-spacing:-0.172px;left:592.51px;">Layout</span>
<span class="t" style="top:151.30px;font-size:11px;color:#fff;letter-spacing:0.025px;left:732.96px;">Options</span>
<span class="t" style="top:94.00px;font-size:11px;color:#9a9a9a;letter-spacing:-0.170px;left:18.60px;">Delete a database</span>
<span class="t" style="top:123.50px;font-size:11px;color:#333;letter-spacing:-0.120px;left:16.40px;width:78.10px;overflow:hidden;">TeamLuxemborg</span>
<span class="t" style="top:123.50px;font-size:11px;color:#333;letter-spacing:-0.345px;left:127.00px;">DYN_cyclist</span>
<span class="t" style="top:94.00px;font-size:11px;color:#333;letter-spacing:0.014px;left:129.30px;">Define table layout</span>
<span class="t" style="top:95.30px;font-size:16px;color:#000;letter-spacing:-0.120px;font-weight:bold;left:230.34px;">M</span>
<span class="t" style="top:94.00px;font-size:11px;color:#333;letter-spacing:-0.089px;left:248.60px;">Manager</span>
<span class="t" style="top:95.30px;font-size:16px;color:#000;letter-spacing:-0.120px;font-weight:bold;left:328.11px;">T</span>
<span class="t" style="top:94.00px;font-size:11px;color:#333;letter-spacing:-0.421px;left:344.70px;">Teams</span>
<span class="t" style="top:95.30px;font-size:16px;color:#000;letter-spacing:-0.120px;font-weight:bold;left:390.22px;">R</span>
<span class="t" style="top:94.00px;font-size:11px;color:#333;letter-spacing:-0.858px;left:407.40px;">Races</span>
<span class="t" style="top:124.30px;font-size:16px;color:#000;letter-spacing:-0.120px;font-weight:bold;left:230.77px;">O</span>
<span class="t" style="top:123.00px;font-size:11px;color:#333;letter-spacing:-0.148px;left:248.60px;">Sponsor goals</span>
<span class="t" style="top:124.30px;font-size:16px;color:#000;letter-spacing:-0.120px;font-weight:bold;left:327.22px;">C</span>
<span class="t" style="top:123.00px;font-size:11px;color:#333;letter-spacing:-0.411px;left:344.70px;">Cyclists</span>
<span class="t" style="top:124.30px;font-size:16px;color:#000;letter-spacing:-0.120px;font-weight:bold;left:390.66px;">S</span>
<span class="t" style="top:123.00px;font-size:11px;color:#333;letter-spacing:-0.442px;left:407.40px;">Stages</span>
<span class="t" style="top:87.00px;font-size:11px;color:#9a9a9a;letter-spacing:0.080px;left:470.70px;">No layout</span>
<span class="t" style="top:109.00px;font-size:11px;color:#9a9a9a;letter-spacing:-0.238px;left:470.70px;">Layout 1</span>
<span class="t" style="top:131.00px;font-size:11px;color:#9a9a9a;letter-spacing:-0.238px;left:470.70px;">Layout 2</span>
<span class="t" style="top:87.00px;font-size:11px;color:#333;letter-spacing:-0.123px;left:549.30px;">Reset columns positions</span>
<span class="t" style="top:109.00px;font-size:11px;color:#333;letter-spacing:-0.246px;left:549.30px;">Reset column size</span>
<span class="t" style="top:131.00px;font-size:11px;color:#333;letter-spacing:0.032px;left:549.30px;">Reset sorting/grouping</span>
<span class="t" style="top:95.00px;font-size:11px;color:#333;letter-spacing:-0.054px;left:704.30px;">Use column translation</span>
<span class="t" style="top:123.00px;font-size:11px;color:#333;letter-spacing:-0.061px;left:704.30px;">Use team filter</span>
<span class="t" style="top:193.00px;font-size:12px;color:#262626;letter-spacing:-0.102px;left:44.25px;">IDcyclist</span>
<span class="t" style="top:193.00px;font-size:12px;color:#262626;letter-spacing:-0.311px;left:164.25px;">Last name</span>
<span class="t" style="top:193.00px;font-size:12px;color:#262626;letter-spacing:-0.219px;left:284.25px;">First name</span>
<span class="t" style="top:193.00px;font-size:12px;color:#262626;letter-spacing:-0.323px;left:404.25px;width:107.35px;overflow:hidden;">gene_sz_firstlastname</span>
<span class="t" style="top:193.00px;font-size:12px;color:#262626;letter-spacing:-0.002px;left:524.25px;">fkIDteam</span>
<span class="t" style="top:193.00px;font-size:12px;color:#262626;letter-spacing:0.039px;left:644.25px;">fkIDcontract</span>
<span class="t" style="top:193.00px;font-size:12px;color:#262626;letter-spacing:-0.276px;left:764.25px;">gene_sz_tga_photo</span>
<span class="t" style="top:193.00px;font-size:12px;color:#262626;letter-spacing:-0.271px;left:884.25px;">gene_i_birth_day</span>
<span class="t" style="top:193.00px;font-size:12px;color:#262626;letter-spacing:-0.115px;left:1004.25px;">gene_i_birth_month</span>
<span class="t" style="top:193.00px;font-size:12px;color:#262626;letter-spacing:-0.269px;left:1124.25px;">gene_i_birth_year</span>
<span class="t" style="top:193.00px;font-size:12px;color:#262626;letter-spacing:-0.324px;left:1244.25px;">value_i_rank_voted</span>
<span class="t" style="top:193.00px;font-size:12px;color:#262626;letter-spacing:-0.137px;left:1364.25px;">value_i_potentiel</span>
<span class="t" style="top:193.00px;font-size:12px;color:#262626;letter-spacing:-0.401px;left:1484.25px;">AVG</span>
<span class="t" style="top:193.00px;font-size:12px;color:#262626;letter-spacing:-0.180px;left:1604.25px;">fkIDrace</span>
<span class="t" style="top:218.60px;font-size:12px;color:#111;letter-spacing:-0.377px;left:133.72px;">324</span>
<span class="t" style="top:218.60px;font-size:12px;color:#111;letter-spacing:-0.406px;left:160.50px;">Krahe</span>
<span class="t" style="top:218.60px;font-size:12px;color:#111;letter-spacing:-0.419px;left:280.50px;">Boris</span>
<span class="t" style="top:218.60px;font-size:12px;color:#111;letter-spacing:-0.623px;left:400.50px;">B.Krahe</span>
<span class="t" style="top:218.60px;font-size:12px;color:#111;letter-spacing:-0.380px;left:620.02px;">26</span>
<span class="t" style="top:218.60px;font-size:12px;color:#111;letter-spacing:-0.376px;left:727.42px;">2167</span>
<span class="t" style="top:218.60px;font-size:12px;color:#111;letter-spacing:0.077px;left:760.50px;">nobody_photo</span>
<span class="t" style="top:218.60px;font-size:12px;color:#111;letter-spacing:-0.388px;left:986.31px;">2</span>
<span class="t" style="top:218.60px;font-size:12px;color:#111;letter-spacing:-0.388px;left:1106.31px;">8</span>
<span class="t" style="top:218.60px;font-size:12px;color:#111;letter-spacing:-0.376px;left:1207.42px;">1989</span>
<span class="t" style="top:218.60px;font-size:12px;color:#111;letter-spacing:-0.388px;left:1346.31px;">0</span>
<span class="t" style="top:218.60px;font-size:12px;color:#111;letter-spacing:-0.388px;left:1466.31px;">7</span>
<span class="t" style="top:218.60px;font-size:12px;color:#111;letter-spacing:-0.266px;left:1480.50px;">70.199996948242188</span>
<span class="t" style="top:242.60px;font-size:12px;color:#111;letter-spacing:-0.376px;left:127.42px;">1321</span>
<span class="t" style="top:242.60px;font-size:12px;color:#111;letter-spacing:-0.196px;left:160.50px;">Smiljanic</span>
<span class="t" style="top:242.60px;font-size:12px;color:#111;letter-spacing:-0.141px;left:280.50px;">Matias</span>
<span class="t" style="top:242.60px;font-size:12px;color:#111;letter-spacing:-0.168px;left:400.50px;">M.Smiljanic</span>
<span class="t" style="top:242.60px;font-size:12px;color:#111;letter-spacing:-0.380px;left:620.02px;">26</span>
<span class="t" style="top:242.60px;font-size:12px;color:#111;letter-spacing:-0.380px;left:740.02px;">16</span>
<span class="t" style="top:242.60px;font-size:12px;color:#111;letter-spacing:0.077px;left:760.50px;">nobody_photo</span>
<span class="t" style="top:242.60px;font-size:12px;color:#111;letter-spacing:-0.380px;left:980.02px;">18</span>
<span class="t" style="top:242.60px;font-size:12px;color:#111;letter-spacing:-0.388px;left:1106.31px;">4</span>
<span class="t" style="top:242.60px;font-size:12px;color:#111;letter-spacing:-0.376px;left:1207.42px;">1992</span>
<span class="t" style="top:242.60px;font-size:12px;color:#111;letter-spacing:-0.388px;left:1346.31px;">0</span>
<span class="t" style="top:242.60px;font-size:12px;color:#111;letter-spacing:-0.388px;left:1466.31px;">6</span>
<span class="t" style="top:242.60px;font-size:12px;color:#111;letter-spacing:-0.266px;left:1480.50px;">70.400001525878906</span>
<span class="t" style="top:266.60px;font-size:12px;color:#111;letter-spacing:-0.376px;left:127.42px;">1319</span>
<span class="t" style="top:266.60px;font-size:12px;color:#111;letter-spacing:-0.194px;left:160.50px;">Nicolas</span>
<span class="t" style="top:266.60px;font-size:12px;color:#111;letter-spacing:-0.393px;left:280.50px;">Gérard</span>
<span class="t" style="top:266.60px;font-size:12px;color:#111;letter-spacing:-0.363px;left:400.50px;">G.Nicolas</span>
<span class="t" style="top:266.60px;font-size:12px;color:#111;letter-spacing:-0.380px;left:620.02px;">26</span>
<span class="t" style="top:266.60px;font-size:12px;color:#111;letter-spacing:0.066px;left:740.47px;">11</span>
<span class="t" style="top:266.60px;font-size:12px;color:#111;letter-spacing:0.077px;left:760.50px;">nobody_photo</span>
<span class="t" style="top:266.60px;font-size:12px;color:#111;letter-spacing:-0.388px;left:986.31px;">4</span>
<span class="t" style="top:266.60px;font-size:12px;color:#111;letter-spacing:-0.388px;left:1106.31px;">6</span>
<span class="t" style="top:266.60px;font-size:12px;color:#111;letter-spacing:-0.376px;left:1207.42px;">1991</span>
<span class="t" style="top:266.60px;font-size:12px;color:#111;letter-spacing:-0.388px;left:1346.31px;">0</span>
<span class="t" style="top:266.60px;font-size:12px;color:#111;letter-spacing:-0.388px;left:1466.31px;">7</span>
<span class="t" style="top:266.60px;font-size:12px;color:#111;letter-spacing:-0.266px;left:1480.50px;">71.849998474121094</span>
<span class="t" style="top:898.60px;font-size:12px;color:#111;letter-spacing:-0.377px;left:133.72px;">849</span>
<span class="t" style="top:898.60px;font-size:12px;color:#111;letter-spacing:0.080px;left:160.50px;">Stortoni</span>
<span class="t" style="top:898.60px;font-size:12px;color:#111;letter-spacing:-0.281px;left:280.50px;">Simone</span>
<span class="t" style="top:898.60px;font-size:12px;color:#111;letter-spacing:-0.140px;left:400.50px;">S.Stortoni</span>
<span class="t" style="top:898.60px;font-size:12px;color:#111;letter-spacing:-0.380px;left:620.02px;">26</span>
<span class="t" style="top:898.60px;font-size:12px;color:#111;letter-spacing:-0.376px;left:727.42px;">1053</span>
<span class="t" style="top:898.60px;font-size:12px;color:#111;letter-spacing:0.099px;left:760.50px;">sstortoni</span>
<span class="t" style="top:898.60px;font-size:12px;color:#111;letter-spacing:-0.388px;left:986.31px;">7</span>
<span class="t" style="top:898.60px;font-size:12px;color:#111;letter-spacing:-0.388px;left:1106.31px;">7</span>
<span class="t" style="top:898.60px;font-size:12px;color:#111;letter-spacing:-0.376px;left:1207.42px;">1985</span>
<span class="t" style="top:898.60px;font-size:12px;color:#111;letter-spacing:-0.388px;left:1346.31px;">0</span>
<span class="t" style="top:898.60px;font-size:12px;color:#111;letter-spacing:-0.388px;left:1466.31px;">8</span>
<span class="t" style="top:898.60px;font-size:12px;color:#111;letter-spacing:-0.266px;left:1480.50px;">74.199996948242188</span>
<span class="t" style="top:922.60px;font-size:12px;color:#111;letter-spacing:-0.376px;left:127.42px;">1098</span>
<span class="t" style="top:922.60px;font-size:12px;color:#111;letter-spacing:-0.292px;left:160.50px;">Ferraro</span>
<span class="t" style="top:922.60px;font-size:12px;color:#111;letter-spacing:0.142px;left:280.50px;">Antonio</span>
<span class="t" style="top:922.60px;font-size:12px;color:#111;letter-spacing:-0.299px;left:400.50px;">A.Ferraro</span>
<span class="t" style="top:922.60px;font-size:12px;color:#111;letter-spacing:-0.380px;left:620.02px;">26</span>
<span class="t" style="top:922.60px;font-size:12px;color:#111;letter-spacing:-0.376px;left:727.42px;">2372</span>
<span class="t" style="top:922.60px;font-size:12px;color:#111;letter-spacing:0.077px;left:760.50px;">nobody_photo</span>
<span class="t" style="top:922.60px;font-size:12px;color:#111;letter-spacing:0.066px;left:980.47px;">11</span>
<span class="t" style="top:922.60px;font-size:12px;color:#111;letter-spacing:-0.388px;left:1106.31px;">2</span>
<span class="t" style="top:922.60px;font-size:12px;color:#111;letter-spacing:-0.376px;left:1207.42px;">1991</span>
<span class="t" style="top:922.60px;font-size:12px;color:#111;letter-spacing:-0.388px;left:1346.31px;">0</span>
<span class="t" style="top:922.60px;font-size:12px;color:#111;letter-spacing:-0.388px;left:1466.31px;">6</span>
<span class="t" style="top:922.60px;font-size:12px;color:#111;letter-spacing:0.094px;left:1480.50px;">74.75</span>
<span class="t" style="top:946.60px;font-size:12px;color:#111;letter-spacing:-0.376px;left:127.42px;">2055</span>
<span class="t" style="top:946.60px;font-size:12px;color:#111;letter-spacing:-0.196px;left:160.50px;">Phinney</span>
<span class="t" style="top:946.60px;font-size:12px;color:#111;letter-spacing:-0.003px;left:280.50px;">Taylor</span>
<span class="t" style="top:946.60px;font-size:12px;color:#111;letter-spacing:-0.223px;left:400.50px;">T.Phinney</span>
<span class="t" style="top:946.60px;font-size:12px;color:#111;letter-spacing:-0.380px;left:620.02px;">26</span>
<span class="t" style="top:946.60px;font-size:12px;color:#111;letter-spacing:-0.377px;left:733.72px;">539</span>
<span class="t" style="top:946.60px;font-size:12px;color:#111;letter-spacing:0.109px;left:760.50px;">tphinney</span>
<span class="t" style="top:946.60px;font-size:12px;color:#111;letter-spacing:-0.380px;left:980.02px;">27</span>
<span class="t" style="top:946.60px;font-size:12px;color:#111;letter-spacing:-0.388px;left:1106.31px;">6</span>
<span class="t" style="top:946.60px;font-size:12px;color:#111;letter-spacing:-0.376px;left:1207.42px;">1990</span>
<span class="t" style="top:946.60px;font-size:12px;color:#111;letter-spacing:-0.388px;left:1346.31px;">0</span>
<span class="t" style="top:946.60px;font-size:12px;color:#111;letter-spacing:-0.388px;left:1466.31px;">7</span>
<span class="t" style="top:946.60px;font-size:12px;color:#111;letter-spacing:-0.266px;left:1480.50px;">75.149993896484375</span>
<span class="t" style="top:970.60px;font-size:12px;color:#111;letter-spacing:-0.380px;left:140.02px;">78</span>
<span class="t" style="top:970.60px;font-size:12px;color:#111;letter-spacing:-0.231px;left:160.50px;">Feillu</span>
<span class="t" style="top:970.60px;font-size:12px;color:#111;letter-spacing:-0.409px;left:280.50px;">Brice</span>
<span class="t" style="top:970.60px;font-size:12px;color:#111;letter-spacing:-0.414px;left:400.50px;">B.Feillu</span>
<span class="t" style="top:970.60px;font-size:12px;color:#111;letter-spacing:-0.380px;left:620.02px;">26</span>
<span class="t" style="top:970.60px;font-size:12px;color:#111;letter-spacing:-0.388px;left:746.31px;">9</span>
<span class="t" style="top:970.60px;font-size:12px;color:#111;letter-spacing:0.092px;left:760.50px;">bfeillu</span>
<span class="t" style="top:970.60px;font-size:12px;color:#111;letter-spacing:-0.380px;left:980.02px;">26</span>
<span class="t" style="top:970.60px;font-size:12px;color:#111;letter-spacing:-0.388px;left:1106.31px;">7</span>
<span class="t" style="top:970.60px;font-size:12px;color:#111;letter-spacing:-0.376px;left:1207.42px;">1985</span>
<span class="t" style="top:970.60px;font-size:12px;color:#111;letter-spacing:-0.388px;left:1346.31px;">0</span>
<span class="t" style="top:970.60px;font-size:12px;color:#111;letter-spacing:-0.388px;left:1466.31px;">5</span>
<span class="t" style="top:970.60px;font-size:12px;color:#111;letter-spacing:-0.266px;left:1480.50px;">75.650001525878906</span>
<span class="t" style="top:291.65px;font-size:12px;color:#2e2e2e;letter-spacing:-0.138px;left:46.50px;">DYN_carac_evolution linked to IDcyclist</span>
<span class="t" style="top:313.58px;font-size:12px;color:#2e2e2e;letter-spacing:-0.101px;left:46.50px;">DYN_chrono_time_trial linked to IDcyclist</span>
<span class="t" style="top:335.51px;font-size:12px;color:#2e2e2e;letter-spacing:-0.172px;left:46.50px;">DYN_classification_race linked to IDcyclist</span>
<span class="t" style="top:357.44px;font-size:12px;color:#2e2e2e;letter-spacing:-0.140px;left:46.50px;">DYN_classification_stage linked to IDcyclist</span>
<span class="t" style="top:379.37px;font-size:12px;color:#2e2e2e;letter-spacing:-0.121px;left:46.50px;">DYN_contract_cyclist linked to IDcyclist</span>
<span class="t" style="top:480.80px;font-size:12px;color:#2e2e2e;letter-spacing:-0.129px;left:46.50px;">DYN_contract_cyclist_offer linked to IDcyclist</span>
<span class="t" style="top:502.74px;font-size:12px;color:#2e2e2e;letter-spacing:-0.082px;left:46.50px;">DYN_equipment_selection linked to IDcyclist</span>
<span class="t" style="top:524.68px;font-size:12px;color:#2e2e2e;letter-spacing:-0.073px;left:46.50px;">DYN_fatigue linked to IDcyclist</span>
<span class="t" style="top:546.62px;font-size:12px;color:#2e2e2e;letter-spacing:-0.070px;left:46.50px;">DYN_invitation_cyclist linked to IDcyclist</span>
<span class="t" style="top:568.56px;font-size:12px;color:#2e2e2e;letter-spacing:-0.093px;left:46.50px;">DYN_journalist_vote linked to IDcyclist</span>
<span class="t" style="top:590.50px;font-size:12px;color:#2e2e2e;letter-spacing:-0.110px;left:46.50px;">DYN_leader_program linked to IDcyclist</span>
<span class="t" style="top:612.44px;font-size:12px;color:#2e2e2e;letter-spacing:-0.108px;left:46.50px;">DYN_media linked to IDcyclist</span>
<span class="t" style="top:634.38px;font-size:12px;color:#2e2e2e;letter-spacing:-0.159px;left:46.50px;">DYN_news linked to IDcyclist</span>
<span class="t" style="top:656.32px;font-size:12px;color:#2e2e2e;letter-spacing:-0.173px;left:46.50px;">DYN_palmares_cyclist linked to IDcyclist</span>
<span class="t" style="top:678.26px;font-size:12px;color:#2e2e2e;letter-spacing:-0.189px;left:46.50px;">DYN_race_results linked to IDcyclist</span>
<span class="t" style="top:700.20px;font-size:12px;color:#2e2e2e;letter-spacing:-0.185px;left:46.50px;">DYN_race_status linked to IDcyclist</span>
<span class="t" style="top:722.14px;font-size:12px;color:#2e2e2e;letter-spacing:-0.182px;left:46.50px;">DYN_race_tactics_normal linked to IDcyclist</span>
<span class="t" style="top:744.08px;font-size:12px;color:#2e2e2e;letter-spacing:-0.175px;left:46.50px;">DYN_race_tactics_tt linked to IDcyclist</span>
<span class="t" style="top:766.02px;font-size:12px;color:#2e2e2e;letter-spacing:-0.154px;left:46.50px;">DYN_race_tactics_ttt linked to IDcyclist</span>
<span class="t" style="top:787.96px;font-size:12px;color:#2e2e2e;letter-spacing:-0.129px;left:46.50px;">DYN_recorded_cyclist linked to IDcyclist</span>
<span class="t" style="top:809.90px;font-size:12px;color:#2e2e2e;letter-spacing:-0.167px;left:46.50px;">DYN_training_camps_bonuses linked to IDcyclist</span>
<span class="t" style="top:831.84px;font-size:12px;color:#2e2e2e;letter-spacing:-0.098px;left:46.50px;">DYN_transfer linked to IDcyclist</span>
<span class="t" style="top:853.78px;font-size:12px;color:#2e2e2e;letter-spacing:-0.113px;left:46.50px;">DYN_transfer_precontact linked to IDcyclist</span>
<span class="t" style="top:875.72px;font-size:12px;color:#2e2e2e;letter-spacing:-0.173px;left:46.50px;">STA_roster_listraces linked to IDcyclist</span>
<span class="t" style="top:407.00px;font-size:12px;color:#262626;letter-spacing:-0.254px;left:64.20px;">IDxchange_cyclist</span>
<span class="t" style="top:407.00px;font-size:12px;color:#262626;letter-spacing:-0.091px;left:184.20px;">fkIDcyclist</span>
<span class="t" style="top:407.00px;font-size:12px;color:#262626;letter-spacing:-0.002px;left:304.20px;">fkIDteam</span>
<span class="t" style="top:407.00px;font-size:12px;color:#262626;letter-spacing:0.011px;left:424.20px;">fkIDstatut</span>
<span class="t" style="top:407.00px;font-size:12px;color:#262626;letter-spacing:-0.219px;left:544.20px;">finan_i_period_wage</span>
<span class="t" style="top:407.00px;font-size:12px;color:#262626;letter-spacing:-0.279px;left:664.20px;">gene_i_contract_end</span>
<span class="t" style="top:407.00px;font-size:12px;color:#262626;letter-spacing:-0.371px;left:784.20px;">gene_i_date</span>
<span class="t" style="top:407.00px;font-size:12px;color:#262626;letter-spacing:-0.270px;left:904.20px;width:106.80px;overflow:hidden;">gene_b_active_contract</span>
<span class="t" style="top:407.00px;font-size:12px;color:#262626;letter-spacing:-0.346px;left:1024.20px;width:107.30px;overflow:hidden;">gene_b_clause_relegation</span>
<span class="t" style="top:407.00px;font-size:12px;color:#262626;letter-spacing:-0.286px;left:1144.20px;">gene_b_stagiaire</span>
<span class="t" style="top:407.00px;font-size:12px;color:#262626;letter-spacing:-0.229px;left:1264.20px;">gene_b_sprinter</span>
<span class="t" style="top:433.20px;font-size:12px;color:#111;letter-spacing:-0.034px;left:160.57px;">11</span>
<span class="t" style="top:433.20px;font-size:12px;color:#111;letter-spacing:-0.351px;left:267.35px;">1319</span>
<span class="t" style="top:433.20px;font-size:12px;color:#111;letter-spacing:-0.555px;left:400.20px;">26</span>
<span class="t" style="top:433.20px;font-size:12px;color:#111;letter-spacing:-0.487px;left:526.31px;">6</span>
<span class="t" style="top:433.20px;font-size:12px;color:#111;letter-spacing:-0.301px;left:747.20px;">2016</span>
<span class="t" style="top:433.20px;font-size:12px;color:#111;letter-spacing:-0.295px;left:828.91px;">1365768000</span>
<span class="t" style="top:431.80px;font-size:12px;color:#2f5f9c;letter-spacing:-0.941px;left:594.60px;">______</span>
<span class="t" style="top:433.20px;font-size:12px;color:#3a6aa6;letter-spacing:-0.301px;left:629.20px;">2000</span>
<span class="t" style="top:1015.00px;font-size:12px;color:#fff;letter-spacing:-0.090px;left:1607.35px;">1:43 AM</span>
<span class="t" style="top:1031.80px;font-size:12px;color:#fff;letter-spacing:-0.144px;left:1603.73px;">4/16/2011</span>
</div></body></html>
